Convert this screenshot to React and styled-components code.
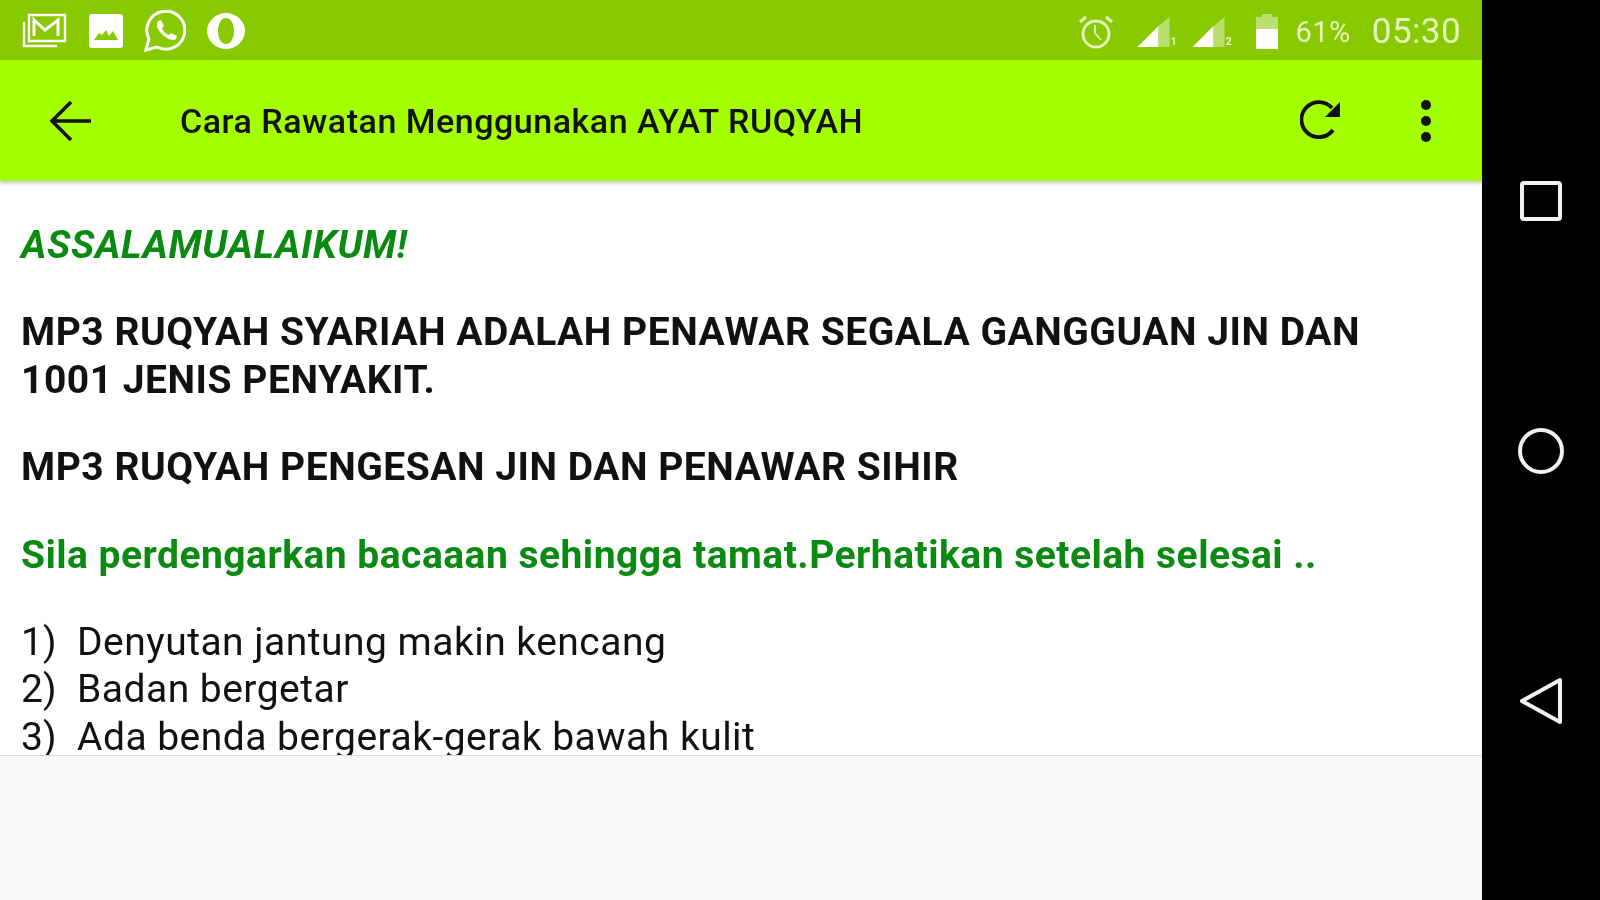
import styled, { createGlobalStyle } from 'styled-components'

const GlobalStyle = createGlobalStyle`
    html, body { margin: 0; padding: 0; background: #000; }
    body { font-family: Roboto, "Liberation Sans", sans-serif; }
`

const items = ['Denyutan jantung makin kencang', 'Badan bergetar', 'Ada benda bergerak-gerak bawah kulit']

export default function App() {
    return (
        <Page>
            <GlobalStyle />
            <Screen>
                <StatusBar>
                    <StatusIcons>
                        <svg width="46" height="38" viewBox="0 0 46 38" fill="none" stroke="#fff" strokeWidth="2.4">
                            <path d="M2 10v24h33" />
                            <path d="M7 3h36v26H7z" fill="#88c900" />
                            <path d="M12 24V8l11 10L36 8v16" strokeWidth="3" />
                        </svg>
                        <svg width="34" height="34" viewBox="0 0 34 34">
                            <path fill="#fff" fillRule="evenodd" d="M3 0h28a3 3 0 0 1 3 3v28a3 3 0 0 1-3 3H3a3 3 0 0 1-3-3V3a3 3 0 0 1 3-3zM5 26h24l-5-9-4 5-3-6-4 5-3-2z" />
                        </svg>
                        <svg width="42" height="42" viewBox="0 0 42 42" fill="none">
                            <path stroke="#fff" strokeWidth="3" d="M2 40l3-11A19 19 0 1 1 13 37z" />
                            <path fill="#fff" d="M14 11l3-1 3 6-2 2c1 3 4 6 7 7l2-2 6 3-1 3c-2 2-7 1-12-3s-9-10-6-15z" />
                        </svg>
                        <svg width="38" height="36" viewBox="0 0 38 36">
                            <path fill="#fff" fillRule="evenodd" d="M19 0c10 0 19 8 19 18s-9 18-19 18S0 28 0 18 9 0 19 0zm0 5c-5 0-8 6-8 13s3 13 8 13 8-6 8-13-3-13-8-13z" />
                        </svg>
                    </StatusIcons>
                    <StatusRight>
                        <AlarmIcon width="36" height="36" viewBox="0 0 36 36" fill="none" stroke="#e6f5c0" strokeWidth="2.8">
                            <circle cx="18" cy="20" r="13" />
                            <path d="M17 11v8l6 7" strokeWidth="1.8" />
                            <path d="M2 8l6-5M34 8l-6-5" strokeWidth="3" />
                        </AlarmIcon>
                        <Signal label="1" />
                        <Signal label="2" />
                        <BatteryIcon width="22" height="35" viewBox="0 0 22 35">
                            <path fill="#b9e070" d="M6 0h10v3h6v12H0V3h6z" />
                            <path fill="#fff" d="M0 15h22v20H0z" />
                        </BatteryIcon>
                        <Percent>61%</Percent>
                        <Clock>05:30</Clock>
                    </StatusRight>
                </StatusBar>
                <AppBar>
                    <BackIcon>
                        <svg width="42" height="42" viewBox="0 0 42 42" fill="none" stroke="#111" strokeWidth="3.6">
                            <path d="M41 21H3M21 2L2 21l19 19" />
                        </svg>
                    </BackIcon>
                    <Title>Cara Rawatan Menggunakan AYAT RUQYAH</Title>
                    <Actions>
                        <svg width="42" height="42" viewBox="0 0 42 42" fill="none">
                            <path stroke="#111" strokeWidth="3.8" d="M33 30A17.5 17.5 0 1 1 32 8" />
                            <path fill="#111" d="M40 2v15H25z" />
                        </svg>
                        <Dots><i /><i /><i /></Dots>
                    </Actions>
                </AppBar>
                <Content>
                    <Greeting>ASSALAMUALAIKUM!</Greeting>
                    <Heading>MP3 RUQYAH SYARIAH ADALAH PENAWAR SEGALA GANGGUAN JIN DAN 1001 JENIS PENYAKIT.</Heading>
                    <Heading>MP3 RUQYAH PENGESAN JIN DAN PENAWAR SIHIR</Heading>
                    <Notice>Sila perdengarkan bacaaan sehingga tamat.Perhatikan setelah selesai ..</Notice>
                    <List>
                        {items.map((item, i) => (
                            <li key={item}><span>{i + 1})</span>{item}</li>
                        ))}
                    </List>
                </Content>
                <Footer />
            </Screen>
            <NavBar>
                <svg width="42" height="42" viewBox="0 0 42 42" fill="none" stroke="#f2f2f2" strokeWidth="4">
                    <rect x="2" y="3" width="38" height="36" rx="2" />
                </svg>
                <svg width="48" height="48" viewBox="0 0 48 48" fill="none" stroke="#f2f2f2" strokeWidth="4">
                    <circle cx="24" cy="24" r="21" />
                </svg>
                <svg width="44" height="48" viewBox="0 0 44 48" fill="none" stroke="#f2f2f2" strokeWidth="4" strokeLinejoin="round">
                    <path d="M41 3v42L3 24z" />
                </svg>
            </NavBar>
        </Page>
    )
}

function Signal({ label }) {
    return (
        <SignalWrap>
            <svg width="33" height="34" viewBox="0 0 34 36">
                <path fill="#b9e070" d="M34 2v32H22V12z" />
                <path fill="#fff" d="M22 12v22H0z" />
            </svg>
            <small>{label}</small>
        </SignalWrap>
    )
}

const Page = styled.div`
    display: flex;
    width: 1600px;
    height: 900px;
    overflow: hidden;
    background: #000;
    filter: blur(0.7px);
`
const Screen = styled.div`
    display: flex;
    flex-direction: column;
    width: 1482px;
    height: 900px;
    background: #fff;
`
const StatusBar = styled.div`
    display: flex;
    align-items: center;
    justify-content: space-between;
    flex: 0 0 60px;
    padding: 1px 21px 0 22px;
    box-sizing: border-box;
    background: #88c900;
`
const StatusIcons = styled.div`
    display: flex;
    align-items: center;
    gap: 21px;
`
const StatusRight = styled.div`
    display: flex;
    align-items: center;
    gap: 12px;
    padding-top: 2px;
`
const AlarmIcon = styled.svg`
    margin-right: 11px;
`
const BatteryIcon = styled.svg`
    margin: 0 5px 0 9px;
`
const SignalWrap = styled.div`
    display: flex;
    align-items: flex-end;
    & small {
        width: 10px;
        font-size: 11px;
        font-weight: 700;
        line-height: 14px;
        color: #e6f5c0;
    }
`
const Percent = styled.span`
    font-size: 29px;
    letter-spacing: 0.5px;
    color: #e6f5c0;
`
const Clock = styled.span`
    margin-left: 9px;
    font-size: 35px;
    letter-spacing: 0.4px;
    color: #e6f5c0;
`
const AppBar = styled.div`
    display: flex;
    align-items: center;
    flex: 0 0 121px;
    padding-left: 50px;
    background: #a4ff00;
    box-shadow: 0 2px 4px rgba(0, 0, 0, 0.25);
    position: relative;
`
const BackIcon = styled.div`
    display: flex;
    width: 130px;
`
const Title = styled.div`
    padding-top: 1px;
    font-size: 34px;
    font-weight: 500;
    letter-spacing: 0.52px;
    color: #111;
`
const Actions = styled.div`
    display: flex;
    align-items: center;
    gap: 79px;
    margin-left: auto;
    padding-right: 51px;
`
const Dots = styled.div`
    display: flex;
    flex-direction: column;
    gap: 6px;
    & i {
        width: 10px;
        height: 10px;
        border-radius: 50%;
        background: #111;
    }
`
const Content = styled.div`
    flex: 0 0 574px;
    overflow: hidden;
    padding: 41px 60px 0 21px;
    box-sizing: border-box;
    font-size: 39px;
    line-height: 47.4px;
    color: #111;
`
const Greeting = styled.p`
    margin: 0 0 40px;
    font-weight: 700;
    font-style: italic;
    letter-spacing: 0.64px;
    color: #0b8a12;
`
const Heading = styled.p`
    margin: 0 0 40px;
    font-weight: 700;
    letter-spacing: 0.52px;
`
const Notice = styled.p`
    margin: 0 0 40px;
    font-weight: 700;
    letter-spacing: 0.48px;
    color: #0b8a12;
`
const List = styled.ol`
    margin: 0;
    padding: 0;
    list-style: none;
    letter-spacing: 0.48px;
    & span {
        display: inline-block;
        width: 56px;
        letter-spacing: 0;
    }
`
const Footer = styled.div`
    flex: 1;
    background: #fafafa;
    border-top: 1px solid #dcdcdc;
`
const NavBar = styled.div`
    display: flex;
    flex-direction: column;
    align-items: center;
    gap: 205px;
    flex: 1;
    padding-top: 180px;
    background: #000;
    & svg:last-child {
        margin-top: -3px;
    }
`
